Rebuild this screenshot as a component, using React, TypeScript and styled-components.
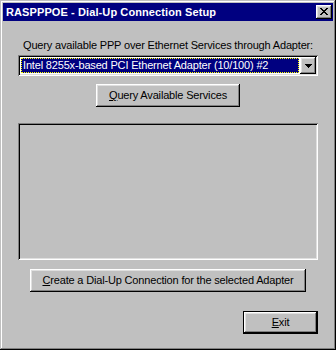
import styled, { createGlobalStyle } from 'styled-components'

const GlobalStyle = createGlobalStyle`
  html, body {
    margin: 0;
    padding: 0;
    background: #c0c0c0;
  }
  body {
    font-family: "Liberation Sans", Arial, sans-serif;
    font-size: 11px;
    color: #000;
  }
`

const Window = styled.div`
  width: 336px;
  height: 350px;
  box-sizing: border-box;
  padding: 3px;
  background: #c0c0c0;
  display: flex;
  flex-direction: column;
  box-shadow: inset -1px -1px #000, inset 1px 1px #c0c0c0,
    inset -2px -2px #808080, inset 2px 2px #fff;
`

const TitleBar = styled.div`
  height: 18px;
  background: #000080;
  display: flex;
  align-items: center;
  justify-content: space-between;
  padding: 0 1px 0 3px;
`

const TitleText = styled.span`
  color: #fff;
  font-weight: bold;
  font-size: 11px;
  line-height: 18px;
  letter-spacing: 0.1px;
  white-space: nowrap;
`

const Bevel = `
  background: #c0c0c0;
  box-shadow: inset -1px -1px #000, inset 1px 1px #fff,
    inset -2px -2px #808080, inset 2px 2px #dfdfdf;
`

const CloseButton = styled.div`
  width: 16px;
  height: 14px;
  ${Bevel}
  display: flex;
  align-items: center;
  justify-content: center;
  padding-bottom: 1px;
  box-sizing: border-box;
`

const Body = styled.div`
  flex: 1;
  display: flex;
  flex-direction: column;
  padding: 0 15px;
  letter-spacing: -0.17px;
`

const Label = styled.div`
  margin-top: 17px;
  height: 14px;
  line-height: 14px;
  text-align: center;
  white-space: nowrap;
`

const Sunken = `
  box-shadow: inset 1px 1px #808080, inset -1px -1px #fff,
    inset 2px 2px #000, inset -2px -2px #dfdfdf;
`

const Combo = styled.div`
  margin-top: 3px;
  height: 21px;
  box-sizing: border-box;
  padding: 2px;
  background: #fff;
  display: flex;
  ${Sunken}
`

const Selected = styled.div`
  flex: 1;
  margin: 1px;
  background: #000080;
  color: #fff;
  border: 1px dotted #ffff00;
  padding-left: 1px;
  line-height: 13px;
  white-space: nowrap;
  overflow: hidden;
`

const DropButton = styled.div`
  width: 16px;
  height: 17px;
  ${Bevel}
  display: flex;
  align-items: center;
  justify-content: center;
`

const Button = styled.div<{ $width: number; $align?: string; $gap: number; $default?: boolean }>`
  width: ${p => p.$width}px;
  height: 23px;
  margin-top: ${p => p.$gap}px;
  align-self: ${p => p.$align || 'center'};
  box-sizing: border-box;
  display: flex;
  align-items: center;
  justify-content: center;
  line-height: 13px;
  white-space: nowrap;
  background: #c0c0c0;
  box-shadow: ${p =>
    p.$default
      ? 'inset 0 0 0 1px #000, inset -2px -2px #000, inset 2px 2px #fff, inset -3px -3px #808080, inset 3px 3px #dfdfdf'
      : 'inset -1px -1px #000, inset 1px 1px #fff, inset -2px -2px #808080, inset 2px 2px #dfdfdf'};
`

const ListBox = styled.div`
  margin-top: 16px;
  height: 137px;
  background: #c0c0c0;
  ${Sunken}
`

const Key = styled.span`
  text-decoration: underline;
`

function CloseGlyph() {
  const px = [
    [0, 0], [1, 0], [6, 0], [7, 0],
    [1, 1], [2, 1], [5, 1], [6, 1],
    [2, 2], [3, 2], [4, 2], [5, 2],
    [3, 3], [4, 3],
    [2, 4], [3, 4], [4, 4], [5, 4],
    [1, 5], [2, 5], [5, 5], [6, 5],
    [0, 6], [1, 6], [6, 6], [7, 6],
  ]
  return (
    <svg width="8" height="7" viewBox="0 0 8 7" shapeRendering="crispEdges">
      {px.map(([x, y]) => <rect key={`${x}-${y}`} x={x} y={y} width="1" height="1" fill="#000" />)}
    </svg>
  )
}

function ArrowGlyph() {
  return (
    <svg width="7" height="4" viewBox="0 0 7 4" shapeRendering="crispEdges">
      <rect x="0" y="0" width="7" height="1" fill="#000" />
      <rect x="1" y="1" width="5" height="1" fill="#000" />
      <rect x="2" y="2" width="3" height="1" fill="#000" />
      <rect x="3" y="3" width="1" height="1" fill="#000" />
    </svg>
  )
}

function App() {
  return (
    <>
      <GlobalStyle />
      <Window>
        <TitleBar>
          <TitleText>RASPPPOE - Dial-Up Connection Setup</TitleText>
          <CloseButton><CloseGlyph /></CloseButton>
        </TitleBar>
        <Body>
          <Label>Query available PPP over Ethernet Services through Adapter:</Label>
          <Combo>
            <Selected>Intel 8255x-based PCI Ethernet Adapter (10/100) #2</Selected>
            <DropButton><ArrowGlyph /></DropButton>
          </Combo>
          <Button $width={144} $gap={8}><Key>Q</Key>uery Available Services</Button>
          <ListBox />
          <Button $width={276} $gap={9}><Key>C</Key>reate a Dial-Up Connection for the selected Adapter</Button>
          <Button $width={75} $gap={19} $align="flex-end" $default><Key>E</Key>xit</Button>
        </Body>
      </Window>
    </>
  )
}

export default App
